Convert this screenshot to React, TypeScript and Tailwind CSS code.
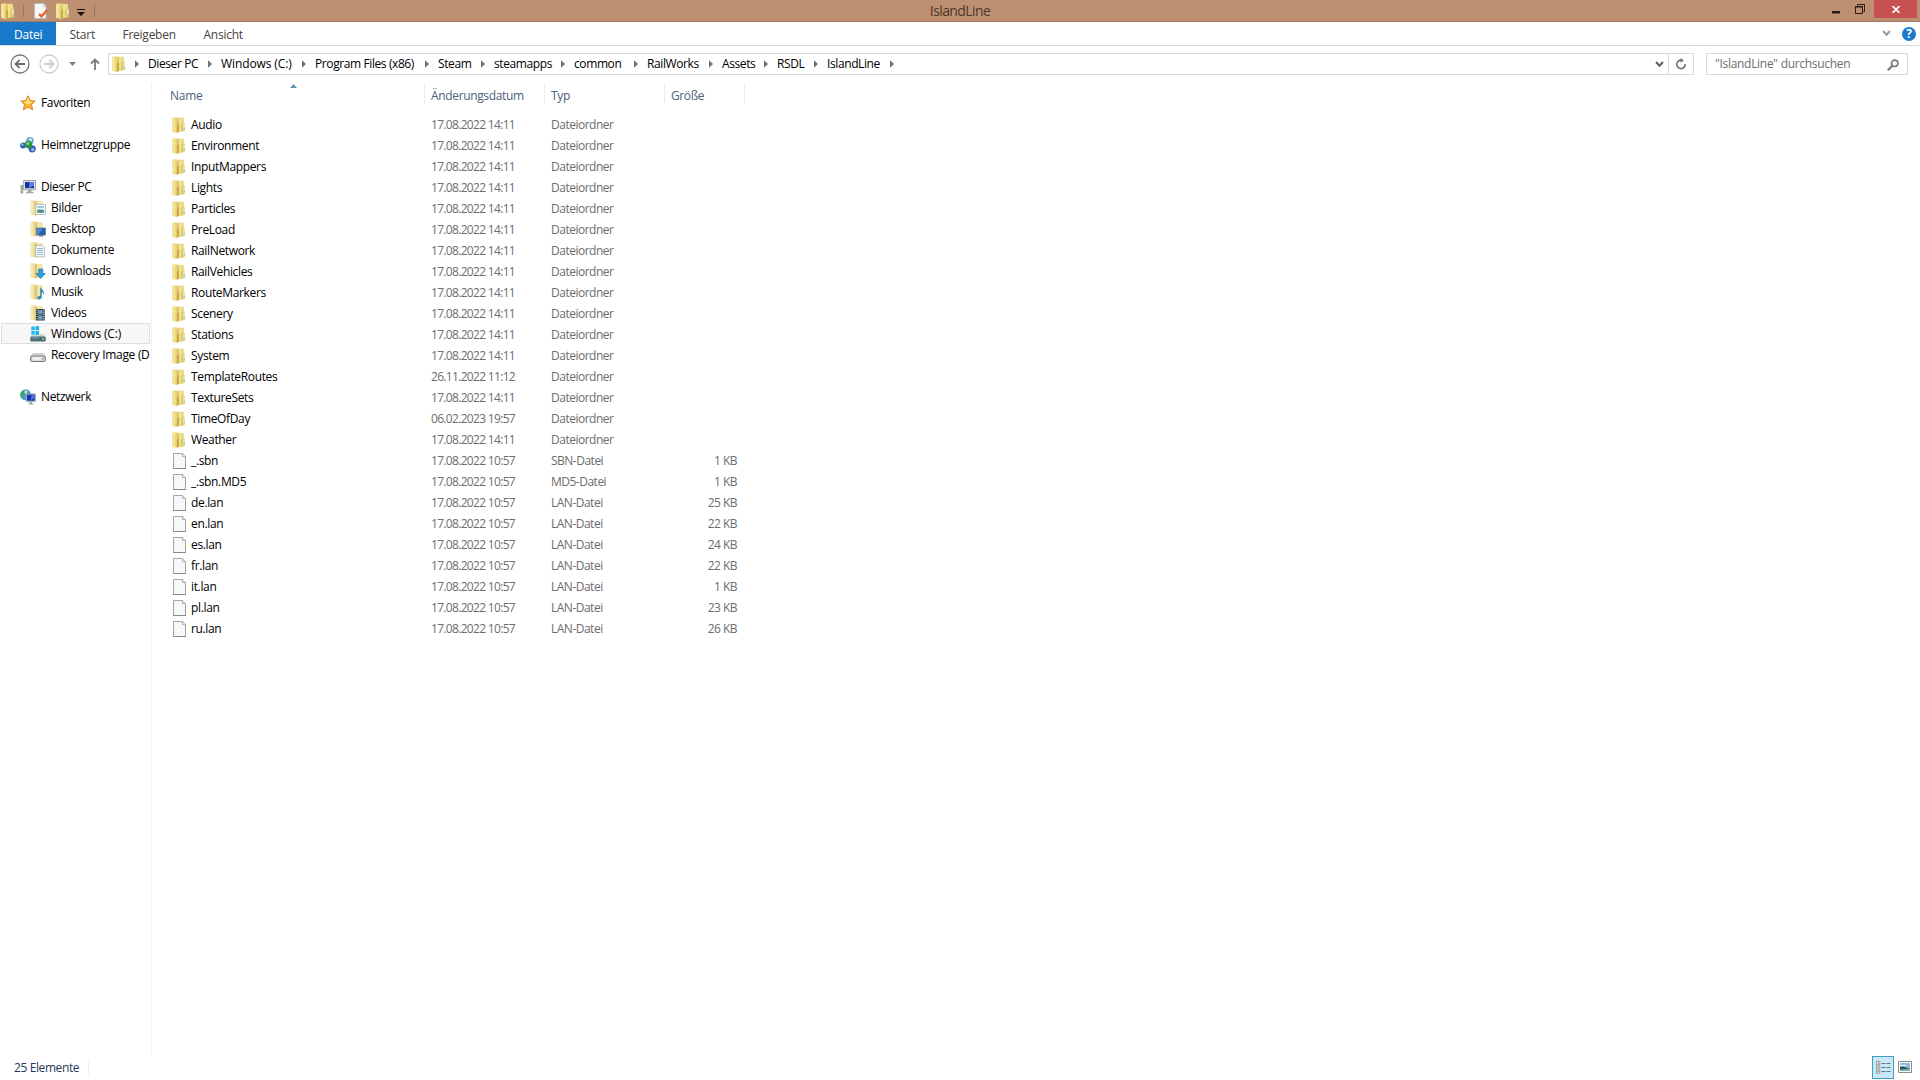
import type { ReactNode } from 'react';

type Entry = { name: string; date: string; type: string; size?: string };

const IMPORT_DATE = '17.08.2022 14:11';
const FILE_DATE = '17.08.2022 10:57';

const folder = (name: string, date = IMPORT_DATE): Entry => ({ name, date, type: 'Dateiordner' });
const file = (name: string, type: string, size: string): Entry => ({ name, date: FILE_DATE, type, size });

const entries: Entry[] = [
    folder('Audio'),
    folder('Environment'),
    folder('InputMappers'),
    folder('Lights'),
    folder('Particles'),
    folder('PreLoad'),
    folder('RailNetwork'),
    folder('RailVehicles'),
    folder('RouteMarkers'),
    folder('Scenery'),
    folder('Stations'),
    folder('System'),
    folder('TemplateRoutes', '26.11.2022 11:12'),
    folder('TextureSets'),
    folder('TimeOfDay', '06.02.2023 19:57'),
    folder('Weather'),
    file('_.sbn', 'SBN-Datei', '1 KB'),
    file('_.sbn.MD5', 'MD5-Datei', '1 KB'),
    file('de.lan', 'LAN-Datei', '25 KB'),
    file('en.lan', 'LAN-Datei', '22 KB'),
    file('es.lan', 'LAN-Datei', '24 KB'),
    file('fr.lan', 'LAN-Datei', '22 KB'),
    file('it.lan', 'LAN-Datei', '1 KB'),
    file('pl.lan', 'LAN-Datei', '23 KB'),
    file('ru.lan', 'LAN-Datei', '26 KB'),
];

const crumbs = [
    { label: 'Dieser PC', width: 'w-[73px]' },
    { label: 'Windows (C:)', width: 'w-[94px]', spacing: 'tracking-[-0.1px]' },
    { label: 'Program Files (x86)', width: 'w-[123px]' },
    { label: 'Steam', width: 'w-[56px]' },
    { label: 'steamapps', width: 'w-[80px]' },
    { label: 'common', width: 'w-[73px]' },
    { label: 'RailWorks', width: 'w-[75px]' },
    { label: 'Assets', width: 'w-[55px]' },
    { label: 'RSDL', width: 'w-[50px]' },
    { label: 'IslandLine', width: 'w-[76px]' },
    { label: '', width: 'w-[13px]' },
];

function Icon({ children, className = 'h-4 w-4' }: { children: ReactNode; className?: string }) {
    return (
        <svg viewBox="0 0 16 16" className={`shrink-0 ${className}`} fill="none">
            {children}
        </svg>
    );
}

function FolderIcon() {
    return (
        <Icon>
            <path d="M1 .7 5 .2l3 .5h4.7l.5 4.8.7 1v7.6L8 15l-2.8.9L1 14.8z" fill="#ecdb83" />
            <path d="M7.5 .9h5v4.6h-2l-3 2z" fill="#e9da8c" />
            <path d="M8.2 7.5 12.8 5.8v8.3l-4.6.7z" fill="#e3cb64" />
            <path d="M5.6 2 7.8 1v13.8l-2.2 1z" fill="#dcc466" />
            <path d="M5.9 8 7.9 6v8.8l-2 .8z" fill="#c8a744" />
            <path d="M1.4 1.2 3.4 1v13.9l-2-.4z" fill="#f3e9a6" />
            <path d="M8.4 1.4h1.3v12.8l-1.3.3z" fill="#f3e9a6" />
            <path d="M12.2 7.3h1.4v5.6h-1.4z" fill="#e4eecb" />
            <path d="M12.7 10.7h.9v1.7h-.9z" fill="#5ea5b4" />
        </Icon>
    );
}

function FileIcon() {
    return (
        <Icon>
            <path d="M2.5 .5h9l3 3v12h-12z" fill="#f9f8f9" stroke="#a3a3a3" />
            <path d="M2 15.5h13" stroke="#8a8a8a" />
            <path d="M11.5 .5v3h3" fill="#e8e8e8" stroke="#a3a3a3" strokeWidth=".8" />
        </Icon>
    );
}

// Yellow library folder with a small badge in front
function LibraryIcon({ children }: { children: ReactNode }) {
    return (
        <Icon>
            <path d="M.5 .8 5 .3l2 .9h5.5v12.5L6.5 15.6l-6-1.2z" fill="#eddc98" />
            <path d="M5 2 7 1.2v13l-2 1.2z" fill="#d9c27a" />
            <path d="M1 1.3h1.7v12.8L1 13.7z" fill="#f6edbb" />
            <path d="M7.6 1.7h3.9V13H7.6z" fill="#f3e6aa" />
            {children}
        </Icon>
    );
}

function StarIcon() {
    return (
        <Icon>
            <path
                d="M8 .8 10.1 5.5 15.2 6.1 11.5 9.5 12.7 14.9 8 12.2 3.3 14.9 4.5 9.5.8 6.1 5.9 5.5z"
                fill="#fbb733"
                stroke="#e0862a"
                strokeLinejoin="round"
            />
            <path d="M8 2.8 9.5 6.5 12.6 7 8 9.2 3.4 7 6.5 6.5z" fill="#ffe58a" />
        </Icon>
    );
}

function HomegroupIcon() {
    return (
        <Icon>
            <circle cx="10" cy="3.8" r="3.7" fill="#62a3cc" />
            <circle cx="3.1" cy="8.4" r="3" fill="#2c63b8" />
            <circle cx="12.2" cy="11.8" r="3.6" fill="#345fb8" />
            <circle cx="10.4" cy="3" r="1.9" fill="#c5e3ef" />
            <circle cx="8.4" cy="7.6" r="3.8" fill="#2e983c" />
            <circle cx="7.8" cy="6.6" r="1.5" fill="#8bd383" />
            <circle cx="2.5" cy="7.6" r="1.1" fill="#a9c8ee" />
            <circle cx="12.7" cy="12.6" r="1.6" fill="#98bbeb" />
        </Icon>
    );
}

function ComputerIcon() {
    return (
        <Icon>
            <path d="M.5 6h2.7v8.5H.5z" fill="#a5a9ab" />
            <path d="M1.1 7h1.2v3H1.1z" fill="#73c364" />
            <path d="M3.6 1.5h11.9v9.2H3.6z" fill="#dfe1e0" stroke="#8b9297" strokeWidth=".8" />
            <path d="M5 3h9v6.2H5z" fill="#1632a8" />
            <path d="M9.5 3H14v3.5L9 9.2z" fill="#5b83de" />
            <path d="M8 11h3.4v1.7H8zM6 12.8h7.5v1.4H6z" fill="#a4a9ad" />
        </Icon>
    );
}

function WindowsDriveIcon() {
    return (
        <Icon>
            <path d="M1.3.8 4.7.3v4H1.3zM5.4.2 9 0v4.3H5.4zM1.3 5h3.4v3.8l-3.4-.4zM5.4 5H9v4.3l-3.6-.4z" fill="#20b5ea" />
            <path d="M9.5 8h4.5l1.5 3H.5l1-2h8z" fill="#d0d4d5" />
            <rect x=".4" y="10.7" width="15.2" height="4.6" rx="1" fill="#496978" stroke="#76868f" strokeWidth=".6" />
            <path d="M1.5 11.5H9v1H1.5z" fill="#7fa9bd" />
            <path d="M12 12.2h2v1.6h-2z" fill="#87dc68" />
        </Icon>
    );
}

function DriveIcon() {
    return (
        <Icon>
            <path d="M3.2 6.5h9.6l2.5 3.2H.7z" fill="#d6d6d6" stroke="#a5a5a5" strokeWidth=".5" />
            <rect x=".7" y="9" width="14.6" height="5.5" rx="1.8" fill="#d9dadb" stroke="#77797b" strokeWidth="1.1" />
            <path d="M2.4 10.4h8.3v2.4H2.4z" fill="#f3f3f3" />
            <path d="M12.3 10.9h1.5v1.7h-1.5z" fill="#71b558" />
        </Icon>
    );
}

function NetworkIcon() {
    return (
        <Icon>
            <circle cx="5.6" cy="5.8" r="5.5" fill="#4a9bc9" />
            <path d="M1.1 4.2C2.6 1 5.6 1.2 6.8 2 5.6 3.8 4.6 3.3 4.4 6 2.9 7 2.3 7.8 1.6 9 .3 7.6.4 5.5 1.1 4.2z" fill="#39a85b" />
            <path d="M5.1 1.2 7.6 1.9 6.1 4.7 4.4 4z" fill="#cbe9ef" />
            <path d="M6.3 4.8h9.2v7.8H6.3z" fill="#dbe0e4" stroke="#85909a" strokeWidth=".6" />
            <path d="M7 5.5h7.8v6.3H7z" fill="#1832b4" />
            <path d="M11.5 5.5h3.3v3.3l-3.9 2.8z" fill="#4c72dc" />
            <path d="M10 12.8h2v1.5h-2zM8.5 14.3h5v1.2h-5z" fill="#9ba3aa" />
        </Icon>
    );
}

const libraries = [
    {
        label: 'Bilder',
        icon: (
            <LibraryIcon>
                <path d="M5.8 4.5h9.7v10H5.8z" fill="#fff" stroke="#a7b5ba" strokeWidth=".8" />
                <path d="M7.2 6h6.9v6.8H7.2z" fill="#9ccbe0" />
                <path d="M7.2 10.2 10 9.6l4.1 1v2.2H7.2z" fill="#5b8a88" />
                <path d="M7.2 8h6.9v1.2H7.2z" fill="#eef7f9" />
            </LibraryIcon>
        ),
    },
    {
        label: 'Desktop',
        icon: (
            <LibraryIcon>
                <path d="M6.5 7h9v7h-9z" fill="#2560a8" stroke="#557993" strokeWidth=".7" />
                <path d="M7 7.5h6l-4.5 6H7z" fill="#4a8acb" />
                <path d="M9 14.2h4.5v1.3H9z" fill="#59727d" />
            </LibraryIcon>
        ),
    },
    {
        label: 'Dokumente',
        icon: (
            <LibraryIcon>
                <path d="M5.8 3.5h6.6l2 2v9.3H5.8z" fill="#fff" stroke="#a4acaf" strokeWidth=".8" />
                <path d="M7.2 6.4h5.8M7.2 8.4h5.8M7.2 10.4h5.8M7.2 12.4h5.8" stroke="#8fb2cf" />
            </LibraryIcon>
        ),
    },
    {
        label: 'Downloads',
        icon: (
            <LibraryIcon>
                <path d="M8.7 6h4v4.5h2.8l-4.8 5-4.8-5h2.8z" fill="#2e9edb" stroke="#2175ac" strokeWidth=".7" />
            </LibraryIcon>
        ),
    },
    {
        label: 'Musik',
        icon: (
            <LibraryIcon>
                <path d="M10.2 2.5c.5 3 4.6 3.5 3.8 8.5-.4-2-1.4-2.8-2.3-3v5c0 3-4.4 3.2-4.4 1 0-1.8 1.5-2.4 2.9-2z" fill="#278ac4" />
            </LibraryIcon>
        ),
    },
    {
        label: 'Videos',
        icon: (
            <LibraryIcon>
                <path d="M6 4h8.7v11.5H6z" fill="#333d43" />
                <path d="M8.2 5h4.4v4.2H8.2zM8.2 10.3h4.4v4.4H8.2z" fill="#6c9fbd" />
                <path d="M7.1 4.5v10.8M13.7 4.5v10.8" stroke="#e4e9eb" strokeDasharray="1 1.2" />
            </LibraryIcon>
        ),
    },
    { label: 'Windows (C:)', icon: <WindowsDriveIcon />, active: true },
    { label: 'Recovery Image (D', icon: <DriveIcon /> },
];

function Arrow() {
    return (
        <svg viewBox="0 0 4 8" className="h-2 w-1 shrink-0">
            <path d="M0 0.3 4 4 0 7.7z" fill="#707070" />
        </svg>
    );
}

function TitleBar() {
    return (
        <header className="flex h-[22px] shrink-0 border-b border-[#a27a62] bg-[#be8f71]">
            <div className="flex h-[21px] flex-1 items-center">
                <FolderIcon />
                <div className="ml-[7px] h-3 w-px bg-[#8d776b]" />
                <svg viewBox="0 0 16 16" className="ml-2.5 h-4 w-4" fill="none">
                    <path d="M.6 .5h8.9l2.5 2.5v12.5H.6z" fill="#f7f9fb" stroke="#b0b9c1" strokeWidth=".8" />
                    <path d="M9.5 .5v3h2.7" fill="#dfe6eb" stroke="#aab4bc" strokeWidth=".6" />
                    <path d="M5 11l2.5 2.5L13.1 7" stroke="#e4673e" strokeWidth="2.5" />
                </svg>
                <div className="ml-[5px]">
                    <FolderIcon />
                </div>
                <svg viewBox="0 0 8 7" className="mt-1 ml-[6px] h-[7px] w-2">
                    <path d="M0 0h8v1H0zM0 3h8L4 7z" fill="#171310" />
                </svg>
                <div className="ml-[9px] h-3 w-px bg-[#8d776b]" />
            </div>
            <h1 className="text-[14px] leading-[21px] font-normal tracking-[-0.6px] text-[#4b382d]">IslandLine</h1>
            <div className="flex h-[21px] flex-1 justify-end">
                <svg viewBox="0 0 8 3" className="mt-[11px] mr-[15px] h-[3px] w-2">
                    <path d="M0 0h8v2.5H0z" fill="#261d17" />
                </svg>
                <svg viewBox="0 0 10 10" className="mt-1 mr-[9px] h-2.5 w-2.5" fill="none">
                    <path d="M2.5 1.5V.5h7v7h-1" stroke="#261d17" />
                    <path d="M.5 2.5h7v7h-7z" stroke="#261d17" />
                    <path d="M0 3h8" stroke="#261d17" />
                </svg>
                <div className="mr-[3px] flex h-[18px] w-[43px] items-center justify-center bg-[#c75050]">
                    <svg viewBox="0 0 8 7" className="mt-px h-[7px] w-2">
                        <path d="M.5 0 7.5 7M7.5 0 .5 7" stroke="#fff" strokeWidth="1.7" />
                    </svg>
                </div>
            </div>
        </header>
    );
}

function RibbonTabs() {
    return (
        <nav className="flex h-6 shrink-0 border-b border-[#dadbdc] text-[#444]">
            <span className="h-[23px] w-14 bg-[#1979ca] pl-3.5 leading-[25px] text-white">Datei</span>
            <span className="w-[53px] pl-[13.5px] leading-[26px]">Start</span>
            <span className="w-[81px] pl-[13.5px] leading-[26px]">Freigeben</span>
            <span className="pl-[13.5px] leading-[26px]">Ansicht</span>
            <div className="ml-auto flex items-center">
                <svg viewBox="0 0 9 7" className="mr-[11px] h-[7px] w-[9px]" fill="none">
                    <path d="M1 1l3.5 3.7L8 1" stroke="#9a9a9a" strokeWidth="2" />
                </svg>
                <span className="mr-1 flex h-[14px] w-[14px] items-center justify-center rounded-full bg-[#1979ca] text-[12px] leading-[14px] font-bold text-white">
                    ?
                </span>
            </div>
        </nav>
    );
}

function AddressBar() {
    return (
        <div className="flex h-[37px] shrink-0 items-start pt-[7px]">
            <div className="flex h-[22px] w-[108px] items-center">
                <svg viewBox="0 0 20 20" className="ml-[10px] h-5 w-5" fill="none">
                    <circle cx="10" cy="10" r="9" stroke="#777" strokeWidth="1.3" />
                    <path d="M15 10H5.7M9.7 5.8 5.5 10l4.2 4.2" stroke="#6e6e6e" strokeWidth="1.8" />
                </svg>
                <svg viewBox="0 0 20 20" className="ml-[9px] h-5 w-5" fill="none">
                    <circle cx="10" cy="10" r="9" stroke="#cfcfcf" strokeWidth="1.3" />
                    <path d="M5 10h9.3M10.3 5.8l4.2 4.2-4.2 4.2" stroke="#cfcfcf" strokeWidth="1.8" />
                </svg>
                <svg viewBox="0 0 7 4" className="ml-[10px] h-1 w-[7px]">
                    <path d="M0 0h7L3.5 4z" fill="#808080" />
                </svg>
                <svg viewBox="0 0 10 12" className="ml-[14px] h-3 w-2.5" fill="none">
                    <path d="M5 12V1.5M1 5.5l4-4 4 4" stroke="#7a7a7a" strokeWidth="1.8" />
                </svg>
            </div>
            <div className="flex h-[22px] w-[1586px] items-center border border-[#d9d9d9]">
                <div className="ml-0.5 w-6">
                    <FolderIcon />
                </div>
                {crumbs.map((crumb, i) => (
                    <div key={i} className={`flex shrink-0 items-center gap-[9px] whitespace-nowrap ${crumb.width}`}>
                        <Arrow />
                        <span className={`leading-5 text-black ${crumb.spacing ?? 'tracking-[-0.4px]'}`}>{crumb.label}</span>
                    </div>
                ))}
                <div className="ml-auto flex h-full items-center">
                    <svg viewBox="0 0 9 7" className="mr-1 h-[7px] w-[9px]" fill="none">
                        <path d="M1 1l3.5 3.7L8 1" stroke="#5e5e5e" strokeWidth="2" />
                    </svg>
                    <div className="flex h-full w-[25px] items-center justify-center border-l border-[#d9d9d9]">
                        <svg viewBox="0 0 12 12" className="h-3 w-3" fill="none">
                            <path d="M6.2 2.2A4.2 4.2 0 1 0 10.2 6" stroke="#777" strokeWidth="1.7" />
                            <path d="M5.5 0v4.8L9 2.4z" fill="#777" />
                        </svg>
                    </div>
                </div>
            </div>
            <div className="ml-3 flex h-[22px] w-[202px] items-center justify-between border border-[#d9d9d9] pr-2 pl-2">
                <span className="leading-5 tracking-[-0.3px] text-[#6d6d6d]">"IslandLine" durchsuchen</span>
                <svg viewBox="0 0 12 12" className="mt-0.5 h-3 w-3" fill="none">
                    <circle cx="7.7" cy="4.3" r="3.2" stroke="#777" strokeWidth="1.6" />
                    <path d="M5.3 6.7.8 11.2" stroke="#777" strokeWidth="2.2" />
                </svg>
            </div>
        </div>
    );
}

function NavRoot({ icon, label }: { icon: ReactNode; label: string }) {
    return (
        <div className="flex h-[21px] items-center gap-[5px] pl-5 tracking-[-0.35px]">
            {icon}
            <span>{label}</span>
        </div>
    );
}

function Sidebar() {
    return (
        <aside className="flex w-[152px] shrink-0 flex-col gap-[21px] border-r border-[#f2f2f2] pt-[9px] text-black">
            <NavRoot icon={<StarIcon />} label="Favoriten" />
            <NavRoot icon={<HomegroupIcon />} label="Heimnetzgruppe" />
            <div>
                <NavRoot icon={<ComputerIcon />} label="Dieser PC" />
                {libraries.map((lib) => (
                    <div
                        key={lib.label}
                        className={`mr-px ml-px flex h-[21px] items-center gap-[5px] border pl-[28px] whitespace-nowrap ${lib.active ? 'border-[#dedede] bg-[#f7f7f7] tracking-[-0.15px]' : 'border-transparent tracking-[-0.3px]'}`}
                    >
                        {lib.icon}
                        <span>{lib.label}</span>
                    </div>
                ))}
            </div>
            <NavRoot icon={<NetworkIcon />} label="Netzwerk" />
        </aside>
    );
}

function ColumnHeader({ label, className }: { label: string; className: string }) {
    return (
        <div className={`flex h-[21px] border-r border-[#e5eff5] ${className}`}>
            <span className="pt-[3px] leading-[20px]">{label}</span>
        </div>
    );
}

function FileList() {
    return (
        <main className="relative flex flex-col pl-[18px]">
            <svg viewBox="0 0 7 4" className="absolute top-px left-[138px] h-1 w-[7px]">
                <path d="M0 4 3.5 0 7 4z" fill="#5d95b4" />
            </svg>
            <div className="flex text-[#4c607a]">
                <ColumnHeader label="Name" className="w-[255px]" />
                <ColumnHeader label="Änderungsdatum" className="w-[120px] pl-1.5 tracking-[-0.35px]" />
                <ColumnHeader label="Typ" className="w-[120px] pl-1.5" />
                <ColumnHeader label="Größe" className="w-[80px] pl-1.5 tracking-[-0.4px]" />
            </div>
            <div className="mt-2.5">
                {entries.map((entry) => (
                    <div key={entry.name} className="flex h-[21px] items-center leading-[21px] whitespace-nowrap text-[#6d6d6d]">
                        <div className="flex w-[261px] items-center gap-[4px] pl-px tracking-[-0.35px] text-black">
                            {entry.size ? <FileIcon /> : <FolderIcon />}
                            <span>{entry.name}</span>
                        </div>
                        <span className="w-[120px] tracking-[-0.68px]">{entry.date}</span>
                        <span className="w-[120px] tracking-[-0.5px]">{entry.type}</span>
                        <span className="w-[66px] text-right tracking-[-0.55px]">{entry.size}</span>
                    </div>
                ))}
            </div>
        </main>
    );
}

function StatusBar() {
    return (
        <footer className="flex h-6 shrink-0 items-center">
            <span className="pl-3.5 tracking-[-0.4px] text-[#1e395b]">25 Elemente</span>
            <div className="ml-[9px] h-3 w-px bg-[#ececec]" />
            <div className="mr-2 ml-auto flex items-center gap-1">
                <div className="mb-px flex h-[23px] w-[22px] items-center justify-center border border-[#3c9dc6] bg-[#cbe8f6]">
                    <svg viewBox="0 0 15 13" className="ml-px h-[13px] w-[15px]" fill="none">
                        <path d="M.5.5h3.3v3.3H.5zM.5 4.7h3.3V8H.5zM.5 9h3.3v3.3H.5z" fill="#fff" stroke="#858585" strokeWidth=".8" />
                        <path d="M1.7 2.1h1M1.7 6.4h1M1.7 10.7h1" stroke="#333" />
                        <path d="M5.5 2.5h4M10.5 2.5h4M5.5 6.5h4M10.5 6.5h4M5.5 10.5h4M10.5 10.5h4" stroke="#59738a" />
                    </svg>
                </div>
                <svg viewBox="0 0 14 12" className="mb-0.5 h-3 w-3.5">
                    <path d="M.5.5h13v11H.5z" fill="#fff" stroke="#8b8b8b" />
                    <path d="M2 2h10v8H2z" fill="#8dbbdb" />
                    <path d="M2 3.8h6v1.4H2z" fill="#e7f3f8" />
                    <path d="M2 6 5 5.5 12 8V5.5V9H2z" fill="#245462" />
                    <path d="M2 8.6 12 7.8V10H2z" fill="#7fb5a4" />
                </svg>
            </div>
        </footer>
    );
}

export default function App() {
    return (
        <div className="flex h-screen w-screen flex-col overflow-hidden bg-white font-['Open_Sans','Segoe_UI',sans-serif] text-[12px] tracking-[-0.25px]">
            <TitleBar />
            <RibbonTabs />
            <AddressBar />
            <div className="flex min-h-0 flex-1">
                <Sidebar />
                <FileList />
            </div>
            <StatusBar />
        </div>
    );
}
